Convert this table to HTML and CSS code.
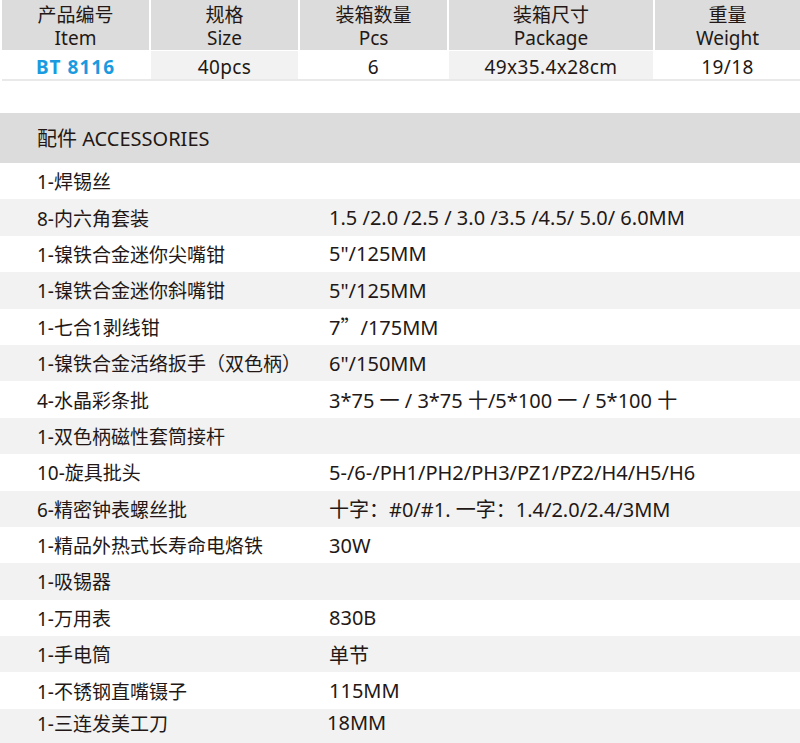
FILE: index.html
```html
<!DOCTYPE html>
<html lang="zh">
<head>
<meta charset="utf-8">
<title>BT 8116</title>
<link rel="stylesheet" href="styles.css">
</head>
<body>
<section class="spec">
  <div class="spec-grid">
    <div class="hd"><span>产品编号</span><span>Item</span></div>
    <div class="hd"><span>规格</span><span>Size</span></div>
    <div class="hd"><span>装箱数量</span><span>Pcs</span></div>
    <div class="hd"><span>装箱尺寸</span><span>Package</span></div>
    <div class="hd"><span>重量</span><span>Weight</span></div>
    <div class="cell code">BT 8116</div>
    <div class="cell alt">40pcs</div>
    <div class="cell">6</div>
    <div class="cell alt">49x35.4x28cm</div>
    <div class="cell">19/18</div>
  </div>
  <div class="spec-line"></div>
</section>

<section class="acc">
  <div class="acc-head">配件 ACCESSORIES</div>
  <div class="acc-list">
    <div class="row"><span class="name">1-焊锡丝</span><span class="val"></span></div>
    <div class="row"><span class="name">8-内六角套装</span><span class="val">1.5 /2.0 /2.5 / 3.0 /3.5 /4.5/ 5.0/ 6.0MM</span></div>
    <div class="row"><span class="name">1-镍铁合金迷你尖嘴钳</span><span class="val">5"/125MM</span></div>
    <div class="row"><span class="name">1-镍铁合金迷你斜嘴钳</span><span class="val">5"/125MM</span></div>
    <div class="row"><span class="name">1-七合1剥线钳</span><span class="val">7<span class="cjk">”</span>/175MM</span></div>
    <div class="row"><span class="name">1-镍铁合金活络扳手（双色柄）</span><span class="val">6"/150MM</span></div>
    <div class="row"><span class="name">4-水晶彩条批</span><span class="val">3*75 一 / 3*75 十/5*100 一 / 5*100 十</span></div>
    <div class="row"><span class="name">1-双色柄磁性套筒接杆</span><span class="val"></span></div>
    <div class="row"><span class="name">10-旋具批头</span><span class="val">5-/6-/PH1/PH2/PH3/PZ1/PZ2/H4/H5/H6</span></div>
    <div class="row"><span class="name">6-精密钟表螺丝批</span><span class="val">十字：#0/#1. 一字：1.4/2.0/2.4/3MM</span></div>
    <div class="row"><span class="name">1-精品外热式长寿命电烙铁</span><span class="val">30W</span></div>
    <div class="row"><span class="name">1-吸锡器</span><span class="val"></span></div>
    <div class="row"><span class="name">1-万用表</span><span class="val">830B</span></div>
    <div class="row"><span class="name">1-手电筒</span><span class="val">单节</span></div>
    <div class="row"><span class="name">1-不锈钢直嘴镊子</span><span class="val">115MM</span></div>
    <div class="row last"><span class="name">1-三连发美工刀</span><span class="val shift">18MM</span></div>
  </div>
</section>
</body>
</html>
```

FILE: styles.css
```css
html, body {
  margin: 0;
  padding: 0;
  background: #ffffff;
}

body {
  width: 800px;
  height: 743px;
  overflow: hidden;
  color: #231815;
  font-family: "Noto Sans", "Noto Sans CJK SC", sans-serif;
}

.spec {
  padding-left: 2px;
}

.spec-grid {
  display: grid;
  grid-template-columns: 147px 147px 147px 204px 145px;
  grid-template-rows: 50px 28px;
  column-gap: 2px;
  row-gap: 1px;
}

.hd {
  background: #dcdcdc;
  display: flex;
  flex-direction: column;
  align-items: center;
  justify-content: center;
  font-size: 19px;
  line-height: 23px;
  padding-top: 3px;
}

.cell {
  display: flex;
  align-items: center;
  justify-content: center;
  font-size: 19px;
  letter-spacing: 0.4px;
  padding-top: 3px;
}

.cell.alt {
  background: #f2f2f2;
}

.cell.code {
  color: #1a9be0;
  font-weight: 700;
  font-size: 19px;
  letter-spacing: 1px;
}

.spec-line {
  height: 2px;
  background: #e9e9e9;
}

.acc {
  margin-top: 32px;
}

.acc-head {
  height: 50px;
  background: #dcdcdc;
  display: flex;
  align-items: center;
  padding-left: 37px;
  font-size: 20px;
  padding-bottom: 2px;
  box-sizing: border-box;
}

.acc-list {
  display: flex;
  flex-direction: column;
}

.row {
  height: 36.4px;
  display: grid;
  grid-template-columns: 292px 1fr;
  align-items: center;
  padding-left: 37px;
  box-sizing: border-box;
}

.row:nth-child(even) {
  background: #f2f2f2;
}

.row.last {
  padding-bottom: 12px;
}

.name {
  font-size: 19px;
}

.val {
  font-size: 20px;
  white-space: nowrap;
}

.cjk {
  font-family: "Noto Sans CJK SC", sans-serif;
}

.val.shift {
  margin-left: -2px;
}
```
